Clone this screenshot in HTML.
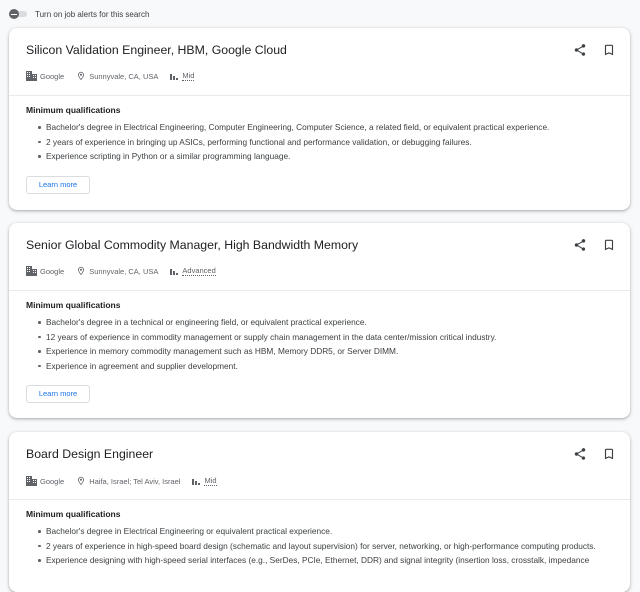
<!DOCTYPE html>
<html><head><meta charset="utf-8"><style>
*{box-sizing:border-box;margin:0;padding:0}
body{width:640px;height:566px;overflow:hidden;background:#f8f9fa;font-family:"Liberation Sans",Arial,sans-serif;color:#3c4043;position:relative}
.alert{position:absolute;left:9px;top:8px;height:12px;display:flex;align-items:center;font-size:8px;color:#3c4043}
.tog{position:relative;width:18px;height:10px;margin-right:8px}
.tog .tr{position:absolute;left:2px;top:2px;width:16px;height:6px;border-radius:3px;background:#dadce0}
.tog .kn{position:absolute;left:0;top:0;width:10px;height:10px;border-radius:50%;background:#5f6368}
.tog .kn:after{content:"";position:absolute;left:2px;top:4.5px;width:6px;height:1px;background:#fff}
.card{position:absolute;left:9px;width:621px;background:#fff;border-radius:8px;box-shadow:0 1px 2px rgba(60,64,67,.3),0 1px 3px 1px rgba(60,64,67,.12);overflow:hidden}
.t{position:absolute;left:17px;font-size:12.3px;color:#202124}
.meta{position:absolute;left:17px;display:flex;align-items:center;font-size:7.5px;color:#5f6368}
.meta span{margin-right:12px;display:flex;align-items:center}
.meta svg{margin-right:3px}
.lvl{border-bottom:1px dotted #5f6368;line-height:9px}
.ic{position:absolute;top:0}
.div{position:absolute;left:0;right:0;height:1px;background:#e8eaed}
.mq{position:absolute;left:17px;font-size:8.5px;font-weight:bold;color:#202124}
ul{position:absolute;left:37px;font-size:8.3px;color:#3c4043;list-style:none}
li{height:14.6px;line-height:14.6px;position:relative;white-space:nowrap}
li:before{content:"";position:absolute;left:-8px;top:6px;width:2.5px;height:2.5px;border-radius:50%;background:#5f6368}
.btn{position:absolute;left:17px;width:64px;height:18px;border:1px solid #dadce0;border-radius:3px;font-size:7.5px;color:#1a73e8;text-align:center;line-height:16px}
</style></head><body>
<div class="alert"><div class="tog"><div class="tr"></div><div class="kn"></div></div>Turn on job alerts for this search</div>

<div class="card" style="top:28px;height:182px">
<div class="t" style="top:15px">Silicon Validation Engineer, HBM, Google Cloud</div>
<svg class="ic" style="left:564px;top:15px" width="14" height="14" viewBox="0 0 24 24"><path fill="#3c4043" d="M18 16.1c-.8 0-1.4.3-2 .8l-7.1-4.2c.1-.2.1-.5.1-.7s0-.5-.1-.7L16 7.2c.5.5 1.2.8 2 .8 1.7 0 3-1.3 3-3s-1.3-3-3-3-3 1.3-3 3c0 .2 0 .5.1.7L8 9.8C7.5 9.3 6.8 9 6 9c-1.7 0-3 1.3-3 3s1.3 3 3 3c.8 0 1.5-.3 2-.8l7.1 4.2c-.1.2-.1.4-.1.6 0 1.6 1.3 2.9 2.9 2.9s2.9-1.3 2.9-2.9-1.2-2.9-2.8-2.9z"/></svg>
<svg class="ic" style="left:593px;top:15px" width="14" height="14" viewBox="0 0 24 24"><path fill="#3c4043" d="M17 3H7c-1.1 0-2 .9-2 2v16l7-3 7 3V5c0-1.1-.9-2-2-2zm0 15l-5-2.2L7 18V5h10v13z"/></svg>
<div class="meta" style="top:42px"><span><svg width="11" height="10" viewBox="0 0 11 10"><path fill="#5f6368" d="M0 0h6v10H0zM6 3h5v7H6z"/><path fill="#fff" d="M1 1h1v1H1zM3 1h1v1H3zM1 3h1v1H1zM3 3h1v1H3zM1 5h1v1H1zM3 5h1v1H3zM7 4h1v1H7zM9 4h1v1H9zM7 6h1v1H7zM9 6h1v1H9z"/></svg>Google</span><span><svg width="10" height="12" viewBox="0 0 24 24"><path fill="#5f6368" d="M12 2C8.1 2 5 5.1 5 9c0 5.2 7 13 7 13s7-7.8 7-13c0-3.9-3.1-7-7-7zm0 17.3C9.9 16.7 7 12.4 7 9c0-2.8 2.2-5 5-5s5 2.2 5 5c0 3.5-2.900 7.7-5 10.3zM12 6.5a2.5 2.5 0 100 5 2.5 2.5 0 000-5z"/></svg>Sunnyvale, CA, USA</span><span><svg width="9" height="8" viewBox="0 0 9 8"><path fill="#5f6368" d="M0 2h2v6H0zM3 4h2v4H3zM6 6h2v2H6z"/></svg><i class="lvl" style="font-style:normal">Mid</i></span></div>
<div class="div" style="top:67px"></div>
<div class="mq" style="top:77px">Minimum qualifications</div>
<ul style="top:92px"><li>Bachelor's degree in Electrical Engineering, Computer Engineering, Computer Science, a related field, or equivalent practical experience.</li><li>2 years of experience in bringing up ASICs, performing functional and performance validation, or debugging failures.</li><li>Experience scripting in Python or a similar programming language.</li></ul>
<div class="btn" style="top:148px">Learn more</div>
</div>

<div class="card" style="top:223px;height:195px">
<div class="t" style="top:15px">Senior Global Commodity Manager, High Bandwidth Memory</div>
<svg class="ic" style="left:564px;top:15px" width="14" height="14" viewBox="0 0 24 24"><path fill="#3c4043" d="M18 16.1c-.8 0-1.4.3-2 .8l-7.1-4.2c.1-.2.1-.5.1-.7s0-.5-.1-.7L16 7.2c.5.5 1.2.8 2 .8 1.7 0 3-1.3 3-3s-1.3-3-3-3-3 1.3-3 3c0 .2 0 .5.1.7L8 9.8C7.5 9.3 6.8 9 6 9c-1.7 0-3 1.3-3 3s1.3 3 3 3c.8 0 1.5-.3 2-.8l7.1 4.2c-.1.2-.1.4-.1.6 0 1.6 1.3 2.9 2.9 2.9s2.9-1.3 2.9-2.9-1.2-2.9-2.8-2.9z"/></svg>
<svg class="ic" style="left:593px;top:15px" width="14" height="14" viewBox="0 0 24 24"><path fill="#3c4043" d="M17 3H7c-1.1 0-2 .9-2 2v16l7-3 7 3V5c0-1.1-.9-2-2-2zm0 15l-5-2.2L7 18V5h10v13z"/></svg>
<div class="meta" style="top:42px"><span><svg width="11" height="10" viewBox="0 0 11 10"><path fill="#5f6368" d="M0 0h6v10H0zM6 3h5v7H6z"/><path fill="#fff" d="M1 1h1v1H1zM3 1h1v1H3zM1 3h1v1H1zM3 3h1v1H3zM1 5h1v1H1zM3 5h1v1H3zM7 4h1v1H7zM9 4h1v1H9zM7 6h1v1H7zM9 6h1v1H9z"/></svg>Google</span><span><svg width="10" height="12" viewBox="0 0 24 24"><path fill="#5f6368" d="M12 2C8.1 2 5 5.1 5 9c0 5.2 7 13 7 13s7-7.8 7-13c0-3.9-3.1-7-7-7zm0 17.3C9.9 16.7 7 12.4 7 9c0-2.8 2.2-5 5-5s5 2.2 5 5c0 3.5-2.9 7.7-5 10.3zM12 6.5a2.5 2.5 0 100 5 2.5 2.5 0 000-5z"/></svg>Sunnyvale, CA, USA</span><span><svg width="9" height="8" viewBox="0 0 9 8"><path fill="#5f6368" d="M0 2h2v6H0zM3 4h2v4H3zM6 6h2v2H6z"/></svg><i class="lvl" style="font-style:normal">Advanced</i></span></div>
<div class="div" style="top:67px"></div>
<div class="mq" style="top:77px">Minimum qualifications</div>
<ul style="top:92px"><li>Bachelor's degree in a technical or engineering field, or equivalent practical experience.</li><li>12 years of experience in commodity management or supply chain management in the data center/mission critical industry.</li><li>Experience in memory commodity management such as HBM, Memory DDR5, or Server DIMM.</li><li>Experience in agreement and supplier development.</li></ul>
<div class="btn" style="top:162px">Learn more</div>
</div>

<div class="card" style="top:432px;height:160px">
<div class="t" style="top:15px">Board Design Engineer</div>
<svg class="ic" style="left:564px;top:15px" width="14" height="14" viewBox="0 0 24 24"><path fill="#3c4043" d="M18 16.1c-.8 0-1.4.3-2 .8l-7.1-4.2c.1-.2.1-.5.1-.7s0-.5-.1-.7L16 7.2c.5.5 1.2.8 2 .8 1.7 0 3-1.3 3-3s-1.3-3-3-3-3 1.3-3 3c0 .2 0 .5.1.7L8 9.8C7.5 9.3 6.8 9 6 9c-1.7 0-3 1.3-3 3s1.3 3 3 3c.8 0 1.5-.3 2-.8l7.1 4.2c-.1.2-.1.4-.1.6 0 1.6 1.3 2.9 2.9 2.9s2.9-1.3 2.9-2.9-1.2-2.9-2.8-2.9z"/></svg>
<svg class="ic" style="left:593px;top:15px" width="14" height="14" viewBox="0 0 24 24"><path fill="#3c4043" d="M17 3H7c-1.1 0-2 .9-2 2v16l7-3 7 3V5c0-1.1-.9-2-2-2zm0 15l-5-2.2L7 18V5h10v13z"/></svg>
<div class="meta" style="top:43px"><span><svg width="11" height="10" viewBox="0 0 11 10"><path fill="#5f6368" d="M0 0h6v10H0zM6 3h5v7H6z"/><path fill="#fff" d="M1 1h1v1H1zM3 1h1v1H3zM1 3h1v1H1zM3 3h1v1H3zM1 5h1v1H1zM3 5h1v1H3zM7 4h1v1H7zM9 4h1v1H9zM7 6h1v1H7zM9 6h1v1H9z"/></svg>Google</span><span><svg width="10" height="12" viewBox="0 0 24 24"><path fill="#5f6368" d="M12 2C8.1 2 5 5.1 5 9c0 5.2 7 13 7 13s7-7.8 7-13c0-3.9-3.1-7-7-7zm0 17.3C9.9 16.7 7 12.4 7 9c0-2.8 2.2-5 5-5s5 2.2 5 5c0 3.5-2.9 7.7-5 10.3zM12 6.5a2.5 2.5 0 100 5 2.5 2.5 0 000-5z"/></svg>Haifa, Israel; Tel Aviv, Israel</span><span><svg width="9" height="8" viewBox="0 0 9 8"><path fill="#5f6368" d="M0 2h2v6H0zM3 4h2v4H3zM6 6h2v2H6z"/></svg><i class="lvl" style="font-style:normal">Mid</i></span></div>
<div class="div" style="top:67px"></div>
<div class="mq" style="top:77px">Minimum qualifications</div>
<ul style="top:92px"><li>Bachelor's degree in Electrical Engineering or equivalent practical experience.</li><li>2 years of experience in high-speed board design (schematic and layout supervision) for server, networking, or high-performance computing products.</li><li>Experience designing with high-speed serial interfaces (e.g., SerDes, PCIe, Ethernet, DDR) and signal integrity (insertion loss, crosstalk, impedance</li></ul>
</div>
</body></html>
